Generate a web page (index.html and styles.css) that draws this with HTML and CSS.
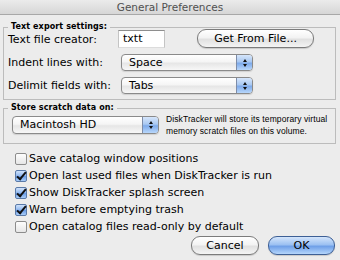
FILE: index.html
```html
<!DOCTYPE html>
<html>
<head>
<meta charset="utf-8">
<link rel="stylesheet" href="styles.css">
</head>
<body>
<div class="window">
  <div class="titlebar">General Preferences</div>
  <div class="content">
    <fieldset class="group group-export">
      <legend>Text export settings:</legend>
      <div class="group-body export-body">
        <div class="row row-creator">
          <span class="label">Text file creator:</span>
          <span class="textfield">txtt</span>
          <span class="button btn-get">Get From File...</span>
        </div>
        <div class="row">
          <span class="label">Indent lines with:</span>
          <span class="popup popup-wide"><span class="popup-text">Space</span><span class="popup-arrows"><i class="up"></i><i class="down"></i></span></span>
        </div>
        <div class="row">
          <span class="label">Delimit fields with:</span>
          <span class="popup popup-wide"><span class="popup-text">Tabs</span><span class="popup-arrows"><i class="up"></i><i class="down"></i></span></span>
        </div>
      </div>
    </fieldset>
    <fieldset class="group group-scratch">
      <legend>Store scratch data on:</legend>
      <div class="group-body scratch-row">
        <span class="popup popup-disk"><span class="popup-text">Macintosh HD</span><span class="popup-arrows"><i class="up"></i><i class="down"></i></span></span>
        <span class="desc">DiskTracker will store its temporary virtual<br>memory scratch files on this volume.</span>
      </div>
    </fieldset>
    <div class="checks">
      <div class="check"><span class="box"></span>Save catalog window positions</div>
      <div class="check"><span class="box on"></span>Open last used files when DiskTracker is run</div>
      <div class="check"><span class="box on"></span>Show DiskTracker splash screen</div>
      <div class="check"><span class="box on"></span>Warn before emptying trash</div>
      <div class="check"><span class="box"></span>Open catalog files read-only by default</div>
    </div>
    <div class="buttons">
      <span class="button btn-cancel">Cancel</span>
      <span class="button btn-ok">OK</span>
    </div>
  </div>
</div>
</body>
</html>
```
FILE: styles.css
```css
html, body {
  margin: 0;
  padding: 0;
}
body {
  width: 340px;
  height: 260px;
  overflow: hidden;
  background: #ececec;
  font-family: "DejaVu Sans", sans-serif;
  font-size: 11px;
  color: #000;
}
.window {
  width: 340px;
  height: 260px;
  display: flex;
  flex-direction: column;
}
.titlebar {
  height: 14px;
  line-height: 14px;
  border-bottom: 1px solid #a8a8a8;
  background: linear-gradient(#ebebeb, #d6d6d6);
  text-align: center;
  color: #505050;
  font-size: 10.5px;
}
.content {
  padding: 0 4px 0 3px;
  display: flex;
  flex-direction: column;
}
.group {
  margin: 0;
  padding: 0;
  border: 1px solid #bcbcbc;
  min-width: 0;
}
.group legend {
  margin-left: 4px;
  padding: 0 3px;
  font-size: 8px;
  font-weight: bold;
  letter-spacing: 0.1px;
  line-height: 10px;
}
.group-export {
  margin-top: 7px;
}
.export-body {
  margin-top: -4px;
  padding: 0 0 2px 4px;
}
.row {
  display: flex;
  align-items: center;
  height: 23px;
}
.label {
  width: 111px;
}
.textfield {
  width: 41px;
  height: 16px;
  line-height: 16px;
  padding-left: 4px;
  background: #fff;
  border-top: 1px solid #8e8e8e;
  border-left: 1px solid #c4c4c4;
  border-right: 1px solid #c4c4c4;
  border-bottom: 1px solid #dcdcdc;
  font-size: 11px;
  margin-left: -1px;
  margin-top: -2px;
}
.button {
  display: inline-flex;
  align-items: center;
  justify-content: center;
  height: 17px;
  border: 1px solid #7b7b7b;
  border-radius: 9px;
  background: linear-gradient(#ffffff 0%, #f3f3f3 45%, #e1e1e1 55%, #f4f4f4 100%);
  box-shadow: 0 1px 1px rgba(0,0,0,0.15);
}
.btn-get {
  width: 115px;
  margin-left: 32px;
  margin-top: -2px;
}
.popup {
  display: inline-flex;
  height: 15px;
  border: 1px solid #8a8a8a;
  border-radius: 4px;
  background: linear-gradient(#ffffff 0%, #f5f5f5 45%, #e6e6e6 55%, #f7f7f7 100%);
  overflow: hidden;
  box-shadow: 0 1px 1px rgba(0,0,0,0.12);
}
.popup-wide {
  width: 130px;
  margin-left: 2px;
}
.popup-text {
  flex: 1;
  line-height: 15px;
  padding-left: 7px;
}
.popup-arrows {
  width: 15px;
  border-left: 1px solid #7d8ca8;
  background: linear-gradient(#d6e6fb 0%, #a9c8f1 45%, #7eaaea 55%, #b8d7fb 100%);
  display: flex;
  flex-direction: column;
  align-items: center;
  justify-content: center;
  gap: 2px;
}
.popup-arrows i {
  display: block;
  width: 0;
  height: 0;
  border-left: 2.5px solid transparent;
  border-right: 2.5px solid transparent;
}
.popup-arrows .up {
  border-bottom: 3px solid #111;
}
.popup-arrows .down {
  border-top: 3px solid #111;
}
.group-scratch {
  margin-top: 3px;
}
.scratch-row {
  display: flex;
  align-items: center;
  height: 30px;
  margin-top: -3px;
  padding: 0 0 3px 8px;
}
.popup-disk {
  width: 145px;
  height: 16px;
}
.popup-disk .popup-text {
  line-height: 16px;
}
.desc {
  margin-left: 7px;
  font-family: "Liberation Sans", sans-serif;
  font-size: 8.5px;
  line-height: 12px;
  white-space: nowrap;
  letter-spacing: 0.1px;
}
.checks {
  margin-top: 6px;
  padding-left: 12px;
  display: flex;
  flex-direction: column;
}
.check {
  display: flex;
  align-items: center;
  height: 17px;
}
.box {
  width: 10px;
  height: 10px;
  border: 1px solid #8c8c8c;
  border-radius: 2px;
  background: linear-gradient(#fdfdfd, #e6e6e6);
  margin-right: 2px;
  position: relative;
}
.box.on {
  border-color: #5a7aa8;
  background: linear-gradient(#cfe2fb 0%, #8fb7ef 50%, #6a9ce6 55%, #a9cdf9 100%);
}
.box.on::after {
  content: "";
  position: absolute;
  left: 3px;
  top: -1px;
  width: 3px;
  height: 8px;
  border-right: 2px solid #111;
  border-bottom: 2px solid #111;
  transform: rotate(40deg);
}
.buttons {
  display: flex;
  justify-content: flex-end;
  gap: 9px;
  margin-top: 1px;
  padding-right: 1px;
}
.btn-cancel {
  width: 66px;
}
.btn-ok {
  width: 65px;
  border-color: #3d5f95;
  background: linear-gradient(#d4e5fb 0%, #9cc1f2 45%, #6fa0e8 55%, #b4d5fb 100%);
}
```
